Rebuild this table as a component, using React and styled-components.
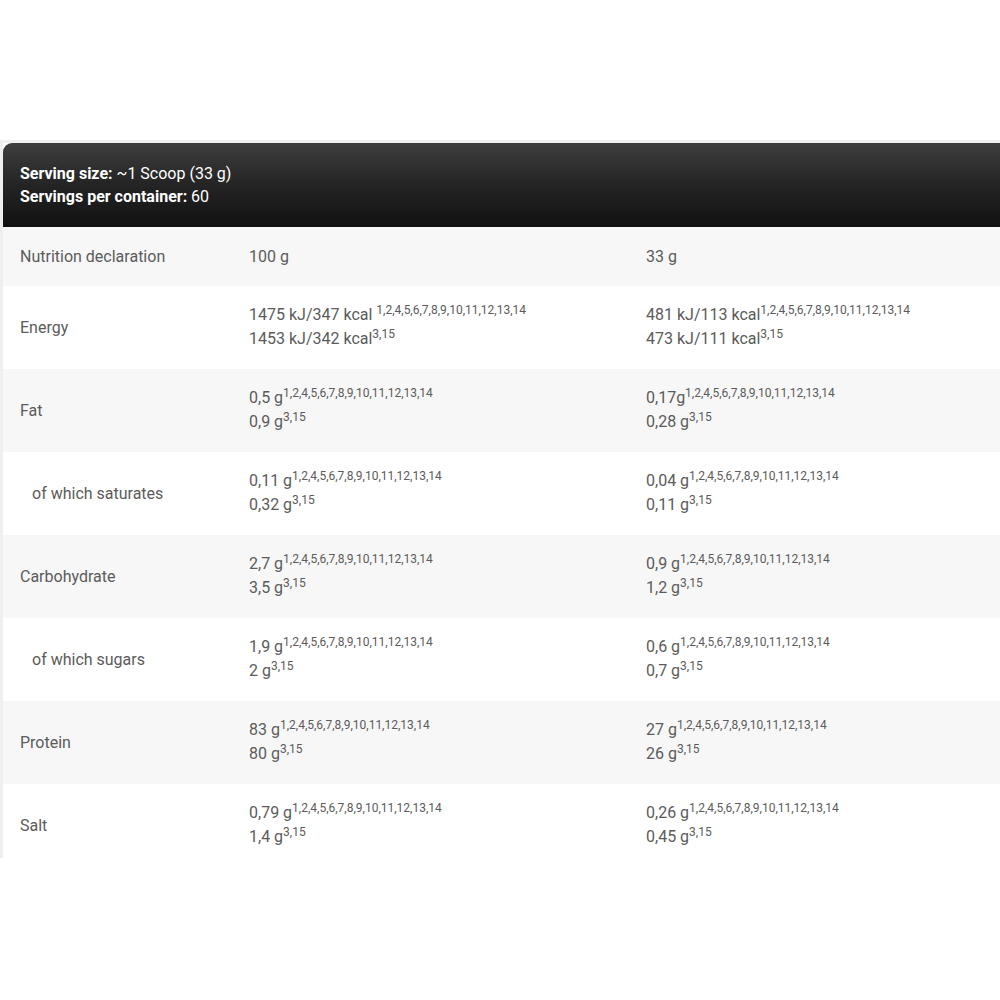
import React from 'react';
import styled, { createGlobalStyle } from 'styled-components';

const GlobalStyle = createGlobalStyle`
    body {
        margin: 0;
        background: #fff;
        font-family: Roboto, "Liberation Sans", Arial, sans-serif;
    }
`;

const Page = styled.div`
    width: 1000px;
    height: 1000px;
    padding-top: 140px;
    box-sizing: border-box;
    overflow: hidden;
`;

const Table = styled.div`
    max-height: 715px;
    overflow: hidden;
    border-top: 3px solid #efefef;
    border-left: 3px solid #efefef;
    background: #fff;
`;

const Header = styled.div`
    display: flex;
    flex-direction: column;
    justify-content: center;
    height: 84px;
    box-sizing: border-box;
    padding: 0 17px;
    border-top-left-radius: 9px;
    background: linear-gradient(to bottom, #3f3f3f 0%, #262626 45%, #111 100%);
    color: #fff;
    font-size: 16px;
    line-height: 23px;

    b {
        font-weight: 700;
    }
`;

const Row = styled.div`
    display: grid;
    grid-template-columns: 229px 397px 1fr;
    align-items: center;
    min-height: ${(p) => p.$height}px;
    background: ${(p) => (p.$shaded ? '#f7f7f7' : '#fff')};
    color: #5b5b5b;
    font-size: 16px;
    line-height: 24px;
`;

const Cell = styled.div`
    padding-left: ${(p) => (p.$indent ? 29 : 17)}px;
`;

const ValueCell = styled(Cell)`
    margin-top: -2px;
`;

const Sup = styled.sup`
    font-size: 12px;
    line-height: 0;
    vertical-align: baseline;
    position: relative;
    top: -6px;
`;

const ALL = '1,2,4,5,6,7,8,9,10,11,12,13,14';
const FEW = '3,15';

const rows = [
    {
        name: 'Energy',
        a: [['1475 kJ/347 kcal ', ALL], ['1453 kJ/342 kcal', FEW]],
        b: [['481 kJ/113 kcal', ALL], ['473 kJ/111 kcal', FEW]],
    },
    { name: 'Fat', a: [['0,5 g', ALL], ['0,9 g', FEW]], b: [['0,17g', ALL], ['0,28 g', FEW]] },
    {
        name: 'of which saturates',
        indent: true,
        a: [['0,11 g', ALL], ['0,32 g', FEW]],
        b: [['0,04 g', ALL], ['0,11 g', FEW]],
    },
    { name: 'Carbohydrate', a: [['2,7 g', ALL], ['3,5 g', FEW]], b: [['0,9 g', ALL], ['1,2 g', FEW]] },
    {
        name: 'of which sugars',
        indent: true,
        a: [['1,9 g', ALL], ['2 g', FEW]],
        b: [['0,6 g', ALL], ['0,7 g', FEW]],
    },
    { name: 'Protein', a: [['83 g', ALL], ['80 g', FEW]], b: [['27 g', ALL], ['26 g', FEW]] },
    { name: 'Salt', a: [['0,79 g', ALL], ['1,4 g', FEW]], b: [['0,26 g', ALL], ['0,45 g', FEW]] },
];

function Values({ lines }) {
    return (
        <ValueCell>
            {lines.map(([text, refs], i) => (
                <div key={i}>
                    {text}
                    <Sup>{refs}</Sup>
                </div>
            ))}
        </ValueCell>
    );
}

export default function App() {
    return (
        <Page>
            <GlobalStyle />
            <Table>
                <Header>
                    <div>
                        <b>Serving size:</b> ~1 Scoop (33 g)
                    </div>
                    <div>
                        <b>Servings per container:</b> 60
                    </div>
                </Header>

                <Row $shaded $height={59}>
                    <Cell>Nutrition declaration</Cell>
                    <Cell>100 g</Cell>
                    <Cell>33 g</Cell>
                </Row>

                {rows.map((row, index) => (
                    <Row key={row.name} $shaded={index % 2 === 1} $height={83}>
                        <Cell $indent={row.indent}>{row.name}</Cell>
                        <Values lines={row.a} />
                        <Values lines={row.b} />
                    </Row>
                ))}
            </Table>
        </Page>
    );
}
